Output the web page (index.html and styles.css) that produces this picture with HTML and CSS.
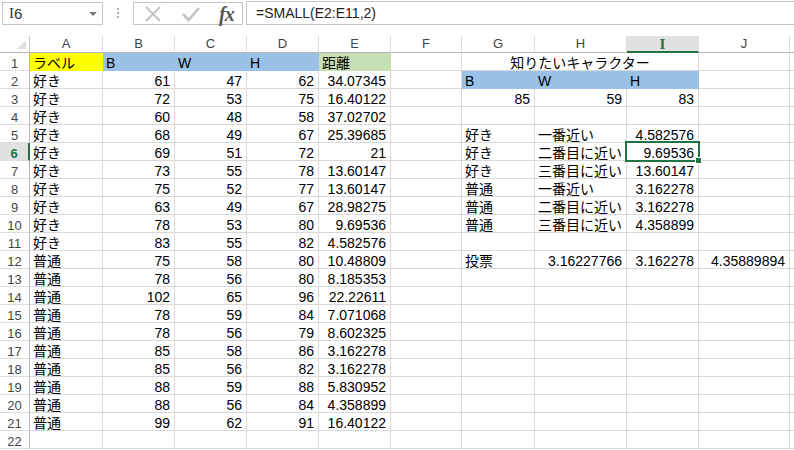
FILE: index.html
```html
<!DOCTYPE html>
<html lang="ja">
<head>
<meta charset="utf-8">
<title>Excel</title>
<link rel="stylesheet" href="styles.css">
</head>
<body>
<div class="fbar">
  <div class="namebox"><span class="serifI">I</span>6<span class="dd"></span></div>
  <div class="vdots"><i></i><i></i><i></i></div>
  <div class="btns">
    <svg class="ic-x" width="18" height="18" viewBox="0 0 18 18"><path d="M2 2 L16 16 M16 2 L2 16" stroke="#c3c3c3" stroke-width="2" fill="none"/></svg>
    <svg class="ic-ok" width="20" height="18" viewBox="0 0 20 18"><path d="M2 9 L7.5 15 L18 3" stroke="#c3c3c3" stroke-width="2.6" fill="none"/></svg>
    <span class="fx">fx</span>
  </div>
  <div class="finput">=SMALL(E2:E11,2)</div>
</div>
<div class="sheet">
  <div class="corner"><span class="tri"></span></div>
  <div class="ch">A</div><div class="ch">B</div><div class="ch">C</div><div class="ch">D</div><div class="ch">E</div><div class="ch">F</div><div class="ch">G</div><div class="ch">H</div><div class="ch sel-ch"><span class="serifI">I</span></div><div class="ch">J</div><div class="ch"></div>

  <div class="rh">1</div><div class="c y">ラベル</div><div class="c b">B</div><div class="c b">W</div><div class="c b">H</div><div class="c g">距離</div><div class="c"></div><div class="c span3">知りたいキャラクター</div><div class="c"></div><div class="c"></div>

  <div class="rh">2</div><div class="c">好き</div><div class="c n">61</div><div class="c n">47</div><div class="c n">62</div><div class="c n">34.07345</div><div class="c"></div><div class="c b">B</div><div class="c b">W</div><div class="c b">H</div><div class="c"></div><div class="c"></div>

  <div class="rh">3</div><div class="c">好き</div><div class="c n">72</div><div class="c n">53</div><div class="c n">75</div><div class="c n">16.40122</div><div class="c"></div><div class="c n">85</div><div class="c n">59</div><div class="c n">83</div><div class="c"></div><div class="c"></div>

  <div class="rh">4</div><div class="c">好き</div><div class="c n">60</div><div class="c n">48</div><div class="c n">58</div><div class="c n">37.02702</div><div class="c"></div><div class="c"></div><div class="c"></div><div class="c"></div><div class="c"></div><div class="c"></div>

  <div class="rh">5</div><div class="c">好き</div><div class="c n">68</div><div class="c n">49</div><div class="c n">67</div><div class="c n">25.39685</div><div class="c"></div><div class="c">好き</div><div class="c">一番近い</div><div class="c n">4.582576</div><div class="c"></div><div class="c"></div>

  <div class="rh sel-rh">6</div><div class="c">好き</div><div class="c n">69</div><div class="c n">51</div><div class="c n">72</div><div class="c n">21</div><div class="c"></div><div class="c">好き</div><div class="c">二番目に近い</div><div class="c n active">9.69536<span class="selbox"></span><span class="handle"></span></div><div class="c"></div><div class="c"></div>

  <div class="rh">7</div><div class="c">好き</div><div class="c n">73</div><div class="c n">55</div><div class="c n">78</div><div class="c n">13.60147</div><div class="c"></div><div class="c">好き</div><div class="c">三番目に近い</div><div class="c n">13.60147</div><div class="c"></div><div class="c"></div>

  <div class="rh">8</div><div class="c">好き</div><div class="c n">75</div><div class="c n">52</div><div class="c n">77</div><div class="c n">13.60147</div><div class="c"></div><div class="c">普通</div><div class="c">一番近い</div><div class="c n">3.162278</div><div class="c"></div><div class="c"></div>

  <div class="rh">9</div><div class="c">好き</div><div class="c n">63</div><div class="c n">49</div><div class="c n">67</div><div class="c n">28.98275</div><div class="c"></div><div class="c">普通</div><div class="c">二番目に近い</div><div class="c n">3.162278</div><div class="c"></div><div class="c"></div>

  <div class="rh">10</div><div class="c">好き</div><div class="c n">78</div><div class="c n">53</div><div class="c n">80</div><div class="c n">9.69536</div><div class="c"></div><div class="c">普通</div><div class="c">三番目に近い</div><div class="c n">4.358899</div><div class="c"></div><div class="c"></div>

  <div class="rh">11</div><div class="c">好き</div><div class="c n">83</div><div class="c n">55</div><div class="c n">82</div><div class="c n">4.582576</div><div class="c"></div><div class="c"></div><div class="c"></div><div class="c"></div><div class="c"></div><div class="c"></div>

  <div class="rh">12</div><div class="c">普通</div><div class="c n">75</div><div class="c n">58</div><div class="c n">80</div><div class="c n">10.48809</div><div class="c"></div><div class="c">投票</div><div class="c n">3.16227766</div><div class="c n">3.162278</div><div class="c n">4.35889894</div><div class="c"></div>

  <div class="rh">13</div><div class="c">普通</div><div class="c n">78</div><div class="c n">56</div><div class="c n">80</div><div class="c n">8.185353</div><div class="c"></div><div class="c"></div><div class="c"></div><div class="c"></div><div class="c"></div><div class="c"></div>

  <div class="rh">14</div><div class="c">普通</div><div class="c n">102</div><div class="c n">65</div><div class="c n">96</div><div class="c n">22.22611</div><div class="c"></div><div class="c"></div><div class="c"></div><div class="c"></div><div class="c"></div><div class="c"></div>

  <div class="rh">15</div><div class="c">普通</div><div class="c n">78</div><div class="c n">59</div><div class="c n">84</div><div class="c n">7.071068</div><div class="c"></div><div class="c"></div><div class="c"></div><div class="c"></div><div class="c"></div><div class="c"></div>

  <div class="rh">16</div><div class="c">普通</div><div class="c n">78</div><div class="c n">56</div><div class="c n">79</div><div class="c n">8.602325</div><div class="c"></div><div class="c"></div><div class="c"></div><div class="c"></div><div class="c"></div><div class="c"></div>

  <div class="rh">17</div><div class="c">普通</div><div class="c n">85</div><div class="c n">58</div><div class="c n">86</div><div class="c n">3.162278</div><div class="c"></div><div class="c"></div><div class="c"></div><div class="c"></div><div class="c"></div><div class="c"></div>

  <div class="rh">18</div><div class="c">普通</div><div class="c n">85</div><div class="c n">56</div><div class="c n">82</div><div class="c n">3.162278</div><div class="c"></div><div class="c"></div><div class="c"></div><div class="c"></div><div class="c"></div><div class="c"></div>

  <div class="rh">19</div><div class="c">普通</div><div class="c n">88</div><div class="c n">59</div><div class="c n">88</div><div class="c n">5.830952</div><div class="c"></div><div class="c"></div><div class="c"></div><div class="c"></div><div class="c"></div><div class="c"></div>

  <div class="rh">20</div><div class="c">普通</div><div class="c n">88</div><div class="c n">56</div><div class="c n">84</div><div class="c n">4.358899</div><div class="c"></div><div class="c"></div><div class="c"></div><div class="c"></div><div class="c"></div><div class="c"></div>

  <div class="rh">21</div><div class="c">普通</div><div class="c n">99</div><div class="c n">62</div><div class="c n">91</div><div class="c n">16.40122</div><div class="c"></div><div class="c"></div><div class="c"></div><div class="c"></div><div class="c"></div><div class="c"></div>

  <div class="rh">22</div><div class="c"></div><div class="c"></div><div class="c"></div><div class="c"></div><div class="c"></div><div class="c"></div><div class="c"></div><div class="c"></div><div class="c"></div><div class="c"></div><div class="c"></div>
</div>
</body>
</html>
```
FILE: styles.css
```css
html, body {
  margin: 0;
  padding: 0;
  background: #ffffff;
}
body {
  width: 794px;
  height: 450px;
  overflow: hidden;
  font-family: "Liberation Sans", "Noto Sans CJK JP", sans-serif;
  font-size: 14px;
  color: #000;
}
.serifI {
  font-family: "Liberation Serif", serif;
}

/* formula bar */
.fbar {
  height: 36px;
  display: flex;
  align-items: flex-start;
  padding-top: 2px;
  box-sizing: border-box;
}
.namebox {
  width: 101px;
  height: 23px;
  margin-left: 2px;
  box-sizing: border-box;
  border: 1px solid #c6c6c6;
  display: flex;
  align-items: center;
  padding-left: 6px;
  font-size: 15px;
  color: #333;
  position: relative;
}
.namebox .dd {
  margin-left: auto;
  margin-right: 5px;
  width: 0;
  height: 0;
  border-left: 4px solid transparent;
  border-right: 4px solid transparent;
  border-top: 4px solid #7a7a7a;
}
.vdots {
  width: 30px;
  display: flex;
  flex-direction: column;
  align-items: center;
  gap: 2px;
  padding-top: 6px;
}
.vdots i {
  display: block;
  width: 2px;
  height: 2px;
  background: #b0b0b0;
}
.btns {
  width: 110px;
  height: 23px;
  box-sizing: border-box;
  border: 1px solid #c6c6c6;
  display: flex;
  align-items: center;
  padding-left: 10px;
}
.ic-x { margin-right: 19px; }
.ic-ok { margin-right: 18px; }
.fx {
  font-family: "Liberation Serif", serif;
  font-style: italic;
  font-weight: bold;
  font-size: 20px;
  color: #555;
  line-height: 20px;
  letter-spacing: -1px;
}
.finput {
  flex: 1;
  height: 24px;
  margin-left: 3px;
  margin-top: -1px;
  box-sizing: border-box;
  border: 1px solid #c6c6c6;
  border-right: none;
  padding-left: 9px;
  line-height: 22px;
  font-size: 14px;
  color: #222;
}

/* sheet grid */
.sheet {
  display: grid;
  grid-template-columns: 30px 73px 72px 72px 72px 72px 71px 73px 92px 72px 91px 1fr;
  grid-template-rows: 17px repeat(22, 18px);
}
.sheet > div {
  box-sizing: border-box;
  border-right: 1px solid #d9d9d9;
  border-bottom: 1px solid #d9d9d9;
  white-space: nowrap;
}
.corner {
  position: relative;
  border-right-color: #c8c8c8 !important;
  border-bottom-color: #b5b5b5 !important;
}
.corner .tri {
  position: absolute;
  right: 3px;
  bottom: 3px;
  width: 0;
  height: 0;
  border-left: 9px solid transparent;
  border-bottom: 9px solid #dfdfdf;
}
.ch {
  text-align: center;
  font-size: 13px;
  line-height: 16px;
  color: #444;
  border-bottom-color: #b5b5b5 !important;
  border-right-color: #dcdcdc !important;
}
.sel-ch {
  background: #e1e1e1;
  color: #217346;
  font-weight: bold;
  border-bottom: 2px solid #217346 !important;
  line-height: 15px;
  font-size: 15px;
}
.rh {
  text-align: center;
  font-size: 13px;
  line-height: 17px;
  padding-top: 2px;
  color: #444;
  border-right-color: #b5b5b5 !important;
  border-bottom-color: #dcdcdc !important;
}
.sel-rh {
  background: #e1e1e1;
  color: #217346;
  font-weight: bold;
  border-right: 2px solid #217346 !important;
}
.c {
  padding: 3px 4px 0 3px;
  line-height: 15px;
  overflow: visible;
}
.n {
  text-align: right;
}
.y {
  background: #ffff00;
  border-color: #ffff00 !important;
}
.b {
  background: #9bc2e6;
  border-color: #9bc2e6 !important;
}
.g {
  background: #c6e0b4;
  border-color: #c6e0b4 !important;
}
.span3 {
  grid-column: span 3;
  text-align: center;
  padding-left: 0;
  padding-right: 0;
}
.active {
  position: relative;
}
.selbox {
  position: absolute;
  left: -2px;
  top: -2px;
  right: -2px;
  bottom: -2px;
  border: 2px solid #217346;
}
.handle {
  position: absolute;
  right: -4px;
  bottom: -4px;
  width: 5px;
  height: 5px;
  background: #217346;
  border: 1px solid #fff;
}
```
